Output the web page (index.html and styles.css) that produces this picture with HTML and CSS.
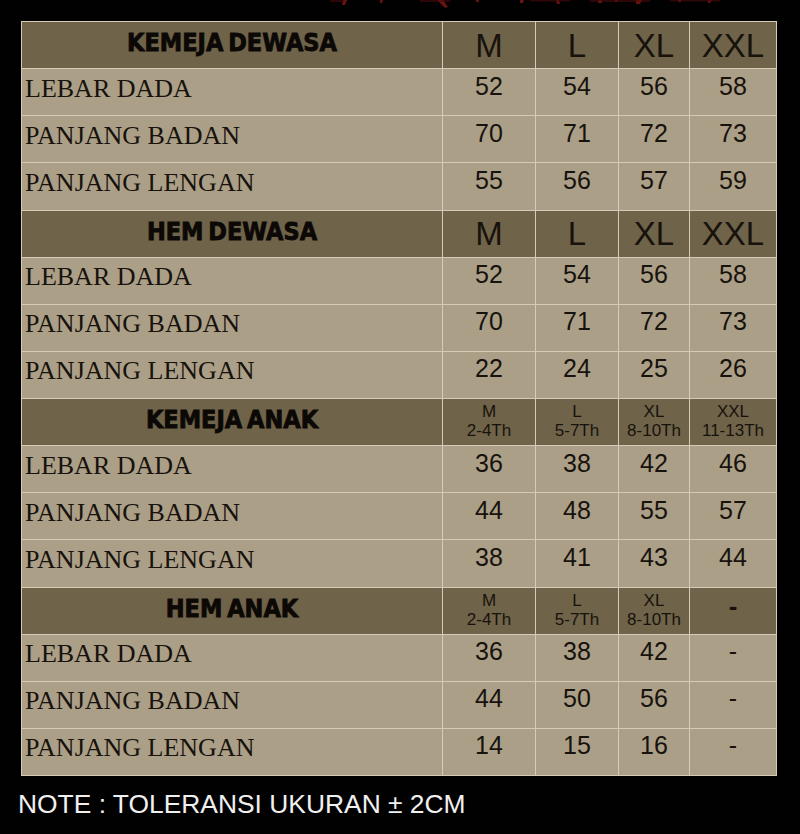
FILE: index.html
```html
<!DOCTYPE html>
<html lang="id">
<head>
<meta charset="utf-8">
<title>Size Chart</title>
<link rel="stylesheet" href="styles.css">
</head>
<body>
<div class="page">
  <div class="title-strip" aria-hidden="true">
    <svg class="glow" width="800" height="12" viewBox="0 0 800 12">
      <g fill="#8a1818" opacity="0.75">
        <path d="M343 0h4l-2 5h-3z"/>
        <path d="M380 0h3l-1 3h-2z"/>
        <path d="M437 0h6l5 7l-3 1z"/>
        <path d="M476 0h3v2h-3z"/>
        <path d="M520 0h4l-1 3h-3z"/>
        <path d="M556 0h3l1 4h-3z"/>
        <path d="M598 0h4v3h-4z"/>
        <path d="M615 0h3l-1 2h-2z"/>
        <path d="M636 0h6l-2 4h-4z"/>
        <path d="M678 0h3v2h-3z"/>
        <path d="M708 0h4l-2 3h-2z"/>
      </g>
      <g fill="#4a0c0c" opacity="0.6">
        <path d="M330 0h14v2h-14z"/>
        <path d="M420 0h30v2h-30z"/>
        <path d="M530 0h40v1.5h-40z"/>
        <path d="M590 0h60v2h-60z"/>
        <path d="M670 0h50v1.5h-50z"/>
      </g>
    </svg>
  </div>
  <div class="chart">
    <div class="sec">KEMEJA DEWASA</div>
    <div class="sz">M</div><div class="sz">L</div><div class="sz">XL</div><div class="sz">XXL</div>
    <div class="lbl">LEBAR DADA</div><div class="num">52</div><div class="num">54</div><div class="num">56</div><div class="num">58</div>
    <div class="lbl">PANJANG BADAN</div><div class="num">70</div><div class="num">71</div><div class="num">72</div><div class="num">73</div>
    <div class="lbl">PANJANG LENGAN</div><div class="num">55</div><div class="num">56</div><div class="num">57</div><div class="num">59</div>

    <div class="sec">HEM DEWASA</div>
    <div class="sz">M</div><div class="sz">L</div><div class="sz">XL</div><div class="sz">XXL</div>
    <div class="lbl">LEBAR DADA</div><div class="num">52</div><div class="num">54</div><div class="num">56</div><div class="num">58</div>
    <div class="lbl">PANJANG BADAN</div><div class="num">70</div><div class="num">71</div><div class="num">72</div><div class="num">73</div>
    <div class="lbl">PANJANG LENGAN</div><div class="num">22</div><div class="num">24</div><div class="num">25</div><div class="num">26</div>

    <div class="sec">KEMEJA ANAK</div>
    <div class="szs">M<br>2-4Th</div><div class="szs">L<br>5-7Th</div><div class="szs">XL<br>8-10Th</div><div class="szs">XXL<br>11-13Th</div>
    <div class="lbl">LEBAR DADA</div><div class="num">36</div><div class="num">38</div><div class="num">42</div><div class="num">46</div>
    <div class="lbl">PANJANG BADAN</div><div class="num">44</div><div class="num">48</div><div class="num">55</div><div class="num">57</div>
    <div class="lbl">PANJANG LENGAN</div><div class="num">38</div><div class="num">41</div><div class="num">43</div><div class="num">44</div>

    <div class="sec">HEM ANAK</div>
    <div class="szs">M<br>2-4Th</div><div class="szs">L<br>5-7Th</div><div class="szs">XL<br>8-10Th</div><div class="szs dash">-</div>
    <div class="lbl">LEBAR DADA</div><div class="num">36</div><div class="num">38</div><div class="num">42</div><div class="num">-</div>
    <div class="lbl">PANJANG BADAN</div><div class="num">44</div><div class="num">50</div><div class="num">56</div><div class="num">-</div>
    <div class="lbl">PANJANG LENGAN</div><div class="num">14</div><div class="num">15</div><div class="num">16</div><div class="num">-</div>
  </div>
  <p class="note">NOTE : TOLERANSI UKURAN ± 2CM</p>
</div>
</body>
</html>
```

FILE: styles.css
```css
html, body {
  margin: 0;
  padding: 0;
  background: #000;
}

.page {
  width: 800px;
  height: 834px;
  overflow: hidden;
  background: #020101;
}

.title-strip {
  height: 21px;
}

.glow {
  display: block;
}

.chart {
  margin-left: 21px;
  width: 756px;
  display: grid;
  grid-template-columns: 420px 92px 82px 70px 86px;
  grid-auto-rows: 46.125px;
  gap: 1px;
  padding: 1px;
  box-sizing: border-box;
  background: #d5cbb8;
}

.chart > div {
  display: flex;
  align-items: center;
  justify-content: center;
  box-sizing: border-box;
  color: #17120c;
}

.sec,
.sz,
.szs {
  background: #6f6349;
}

.lbl,
.num {
  background: #ab9f88;
}

.sec {
  font-family: "DejaVu Sans Condensed", "DejaVu Sans", sans-serif;
  font-stretch: condensed;
  font-weight: 700;
  font-size: 25px;
  line-height: 1;
  word-spacing: -3px;
  color: #0b0806 !important;
  -webkit-text-stroke: 0.8px #0b0806;
  padding-bottom: 5px;
}

.sz {
  font-family: "Liberation Sans", Arial, sans-serif;
  font-size: 33px;
  line-height: 1;
}

.szs {
  font-family: "Liberation Sans", Arial, sans-serif;
  font-size: 17px;
  line-height: 19px;
  text-align: center;
  padding-bottom: 2px;
}

.szs.dash {
  font-size: 26px;
  font-weight: 700;
  padding-bottom: 8px;
}

.lbl {
  justify-content: flex-start !important;
  font-family: "Liberation Serif", "Times New Roman", serif;
  font-size: 26px;
  line-height: 1;
  padding-left: 3px;
  padding-bottom: 7px;
  color: #1a130d;
}

.num {
  font-family: "Liberation Sans", Arial, sans-serif;
  font-size: 25px;
  line-height: 1;
  padding-bottom: 12px;
}

.note {
  margin: 13px 0 0 18px;
  font-family: "Liberation Sans", Arial, sans-serif;
  font-size: 26.4px;
  line-height: 30px;
  color: #f0f0f0;
}
```
